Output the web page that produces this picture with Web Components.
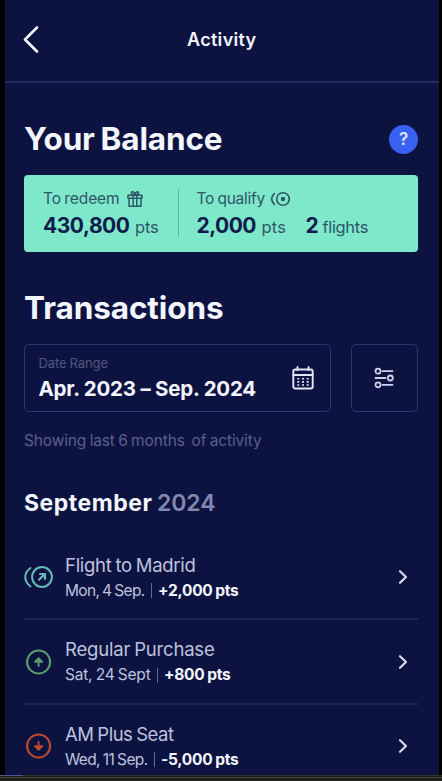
<!DOCTYPE html>
<html lang="en">
<head>
<meta charset="utf-8">
<title>Activity</title>
<style>
html,body{margin:0;height:100%;background:#000;overflow:hidden}
body{font-family:Inter,"Liberation Sans",sans-serif;color:#f3f6ff}
</style>
</head>
<body>
<activity-screen></activity-screen>
<script>
const define=(name,html,setup)=>customElements.define(name,class extends HTMLElement{
  connectedCallback(){
    if(this.shadowRoot)return;
    this.attachShadow({mode:'open'}).innerHTML=typeof html==='function'?html(this):html;
    if(setup)setup(this);
  }
});

/* Single-line text tracked to fill a given measure. */
define('tracked-text',e=>`<style>:host{display:block;flex:none;white-space:pre;width:${e.getAttribute('w')}px;font-size:${e.getAttribute('s')}px;font-weight:${e.getAttribute('b')||400};word-spacing:${e.getAttribute('ws')||'-.05em'}}span{display:inline-block}</style><span><slot></slot></span>`,e=>{
  const s=e.shadowRoot.querySelector('span');
  const natural=s.getBoundingClientRect().width;
  const n=e.textContent.length;
  s.style.letterSpacing=((+e.getAttribute('w')-natural+.5)/n).toFixed(3)+'px';
});

const art={
  back:[18,28,'<path d="M15 1.500 3 13.500l12 12" stroke-width="2.600"/>'],
  next:[10,16,'<path d="M2 2.200 8 8l-6 5.800" stroke-width="2.200"/>'],
  gift:[16,18,'<path d="M1 5.200h14v3H1zM2 8.200v8h12v-8M6.200 5.200v11M9.800 5.200v11M8 5C5 5 4 3.700 4.500 2.400S7.500 1.700 8 5c.5-3.300 3-3.900 3.500-2.600S11 5 8 5" stroke-width="1.500"/>'],
  coin:[20,16,'<circle cx="13" cy="8" r="6.300" stroke-width="1.600"/><circle cx="13" cy="8" r="2.200" fill="currentColor" stroke="none"/><path d="M4.300 2.600Q-1 8 4.300 13.400" stroke-width="1.600"/>'],
  calendar:[22,24,'<rect x="1.300" y="3.500" width="19.400" height="19" rx="2" stroke-width="1.900"/><path d="M1.500 9h19M5.500 1v3M16.500 1v3" stroke-width="1.900"/><path d="M5.300 12.700h2m2.700 0h2m2.700 0h2M5.300 15.900h2m2.700 0h2m2.700 0h2M5.300 19h2m2.700 0h2m2.700 0h2" stroke-width="1.600" stroke-linecap="butt"/>'],
  filter:[20,22,'<circle cx="4" cy="4.200" r="2.500"/><path d="M8.500 4.200h10M1.500 11h10M8.500 17.800h10"/><circle cx="16.300" cy="11" r="2.500"/><circle cx="4" cy="17.800" r="2.500"/>'],
  flight:[30,24,'<circle cx="18" cy="12" r="9.900" stroke-width="2"/><path d="M6.500 3C-.500 8-.500 16 6.500 21.500" stroke-width="2"/><path d="m14.500 15.300 5.300-5.300M15.200 9H21v5.800" stroke-width="2.200" stroke-linecap="butt"/>'],
  up:[30,26,'<circle cx="14.600" cy="13" r="11.500" stroke-width="2.100"/><path d="M14.600 17V10M11 12.800l3.600-3.600 3.600 3.600z" fill="currentColor" stroke-width="1.900"/>'],
  down:[30,26,'<circle cx="14.600" cy="13" r="11.500" stroke-width="2.100"/><path d="M14.600 9v7M11 13.200l3.600 3.600 3.600-3.600z" fill="currentColor" stroke-width="1.900"/>']
};
define('line-icon',e=>{
  const [w,h,p]=art[e.getAttribute('name')];
  return `<style>:host{display:block;flex:none;width:${w}px;height:${h}px}svg{display:block}</style><svg width="${w}" height="${h}" viewBox="0 0 ${w} ${h}" fill="none" stroke="currentColor" stroke-width="1.8" stroke-linecap="round" stroke-linejoin="round">${p}</svg>`;
});

define('app-header',`<style>
:host{display:grid;grid-template-columns:1fr auto 1fr;align-items:center;height:78px;padding:1px 18px 2px 17px;border-bottom:2px solid #252b5a;line-height:22px}
</style><line-icon name="back"></line-icon><slot></slot><i></i>`);

define('help-badge',`<style>:host{display:grid;place-items:center;width:29px;height:29px;border-radius:50%;background:#3860f1;font-size:17px;font-weight:600;line-height:29px;color:#dce5ff}</style><slot></slot>`);

define('section-title',`<style>:host{display:flex;align-items:center;justify-content:space-between;height:30px;line-height:30px}</style><slot></slot><slot name="end"></slot>`);

define('balance-card',`<style>
:host{display:flex;box-sizing:border-box;height:77px;padding:14px 0 0 19px;border-radius:4px;background:#80e8ca}
i{width:1px;height:48px;margin:0 18px 0 19.500px;background:#5db8a8}
</style><slot name="redeem"></slot><i></i><slot name="qualify"></slot>`);

define('balance-item',`<style>
:host{display:block;color:#2b5769}
.l{display:flex;align-items:center;gap:7px;height:20px;line-height:20px}
.v{display:flex;align-items:baseline;gap:6px;height:25px;margin-top:4px;line-height:25px}
</style><div class="l"><slot name="label"></slot></div><div class="v"><slot></slot></div>`);

define('date-field',`<style>
:host{display:flex;align-items:center;justify-content:space-between;box-sizing:border-box;width:307px;height:68px;padding:0 16.500px 0 13.500px;border:1.500px solid #303668;border-radius:5px}
.l{color:#51567f;line-height:19px;height:19px}.v{line-height:25px;height:25px;margin-top:3px}
.t{padding-bottom:1px}
line-icon{color:#e3e6f7}
</style><div class="t"><div class="l"><slot name="label"></slot></div><div class="v"><slot></slot></div></div><line-icon name="calendar"></line-icon>`);

define('filter-button',`<style>
:host{display:grid;place-items:center;box-sizing:border-box;width:67.500px;height:68px;border:1.500px solid #303668;border-radius:5px;color:#cdd3ef}
</style><line-icon name="filter"></line-icon>`);

define('transaction-row',e=>`<style>
:host{display:flex;align-items:center;box-sizing:border-box;height:84.500px;border-bottom:2px solid #1f2553;color:#bdc2df}
.icon{color:${e.getAttribute('tone')};margin:1px 11px 0 0}
.text{flex:1}
.title{height:24px;line-height:24px}
.sub{display:flex;align-items:center;height:20px;line-height:20px;margin-top:4px}
.bar{width:1px;height:15px;background:#646a94;margin:0 6px 0 7px}
.next{margin:1px 10px 0 0;color:#d5daf0}
</style><line-icon class="icon" name="${e.getAttribute('icon')}"></line-icon>
<div class="text"><div class="title"><slot name="title"></slot></div>
<div class="sub"><slot name="date"></slot><i class="bar"></i><slot name="points"></slot></div></div>
<line-icon class="next" name="next"></line-icon>`);

define('system-strip',`<style>
:host{display:flex;flex-direction:column;height:6px;background:#1f1f1c}
.a{height:1px;background:linear-gradient(90deg,#56548d 23px,#31302f 23px)}
.b{height:1px;background:#1b1a19}.c{height:1px;background:#494844}
</style><div class="a"></div><div class="b"></div><div class="c"></div>`);

define('activity-screen',`<style>
:host{display:flex;flex-direction:column;height:781px;width:442px}
.screen{box-sizing:border-box;height:775px;margin:0 3px 0 5px;background:#0d1340;overflow:hidden}
main{padding:0 21px 0 19px}
.dark{color:#0d1c4c}
.balance{margin-top:41px}
balance-card{margin-top:21px}
.transactions{margin-top:41px}
.controls{display:flex;justify-content:space-between;margin-top:21px}
.note{margin-top:18px;height:21px;line-height:21px;color:#5a608b}
.month{display:flex;gap:5px;height:28px;line-height:28px;margin:38px 0 18.500px}
.year{color:#8388ae}
.flights{margin-left:14px}
.per{margin-left:-1px}
.gift{margin-left:1px}
.coin{margin-left:-2px}
.strong{color:#f3f6ff}
</style>
<div class="screen">
<app-header><tracked-text w="69" s="18" b="600">Activity</tracked-text></app-header>
<main>
<section-title class="balance"><tracked-text w="198" s="31.5" b="700">Your Balance</tracked-text><help-badge slot="end">?</help-badge></section-title>
<balance-card>
<balance-item slot="redeem"><tracked-text slot="label" w="76" s="15.5">To redeem</tracked-text><line-icon class="gift" slot="label" name="gift"></line-icon><tracked-text class="dark" w="86" s="21" b="700">430,800</tracked-text><tracked-text w="23" s="16.5">pts</tracked-text></balance-item>
<balance-item slot="qualify"><tracked-text slot="label" w="68" s="15.5">To qualify</tracked-text><line-icon class="coin" slot="label" name="coin"></line-icon><tracked-text class="dark" w="59" s="21" b="700">2,000</tracked-text><tracked-text w="24" s="16.5">pts</tracked-text><tracked-text class="dark flights" w="12" s="21" b="700">2</tracked-text><tracked-text class="per" w="45" s="16.5">flights</tracked-text></balance-item>
</balance-card>
<section-title class="transactions"><tracked-text w="199" s="31.5" b="700">Transactions</tracked-text></section-title>
<div class="controls">
<date-field><tracked-text slot="label" w="69" s="13">Date Range</tracked-text><tracked-text w="217" s="20.5" b="650" ws="0">Apr. 2023 – Sep. 2024</tracked-text></date-field>
<filter-button></filter-button>
</div>
<div class="note"><tracked-text w="237" s="15.5">Showing last 6 months  of activity</tracked-text></div>
<div class="month"><tracked-text w="128" s="23" b="700">September</tracked-text><tracked-text class="year" w="58" s="23" b="600">2024</tracked-text></div>
<transaction-row icon="flight" tone="#67b9b8"><tracked-text slot="title" w="130" s="18.5">Flight to Madrid</tracked-text><tracked-text slot="date" w="79" s="15.5">Mon, 4 Sep.</tracked-text><tracked-text class="strong" slot="points" w="80" s="15.5" b="700">+2,000 pts</tracked-text></transaction-row>
<transaction-row icon="up" tone="#5a9c6c"><tracked-text slot="title" w="149" s="18.5">Regular Purchase</tracked-text><tracked-text slot="date" w="85" s="15.5">Sat, 24 Sept</tracked-text><tracked-text class="strong" slot="points" w="66" s="15.5" b="700">+800 pts</tracked-text></transaction-row>
<transaction-row icon="down" tone="#bd4931"><tracked-text slot="title" w="108" s="18.5">AM Plus Seat</tracked-text><tracked-text slot="date" w="82" s="15.5">Wed, 11 Sep.</tracked-text><tracked-text class="strong" slot="points" w="77" s="15.5" b="700">-5,000 pts</tracked-text></transaction-row>
</main>
</div>
<system-strip></system-strip>`);
</script>
</body>
</html>
